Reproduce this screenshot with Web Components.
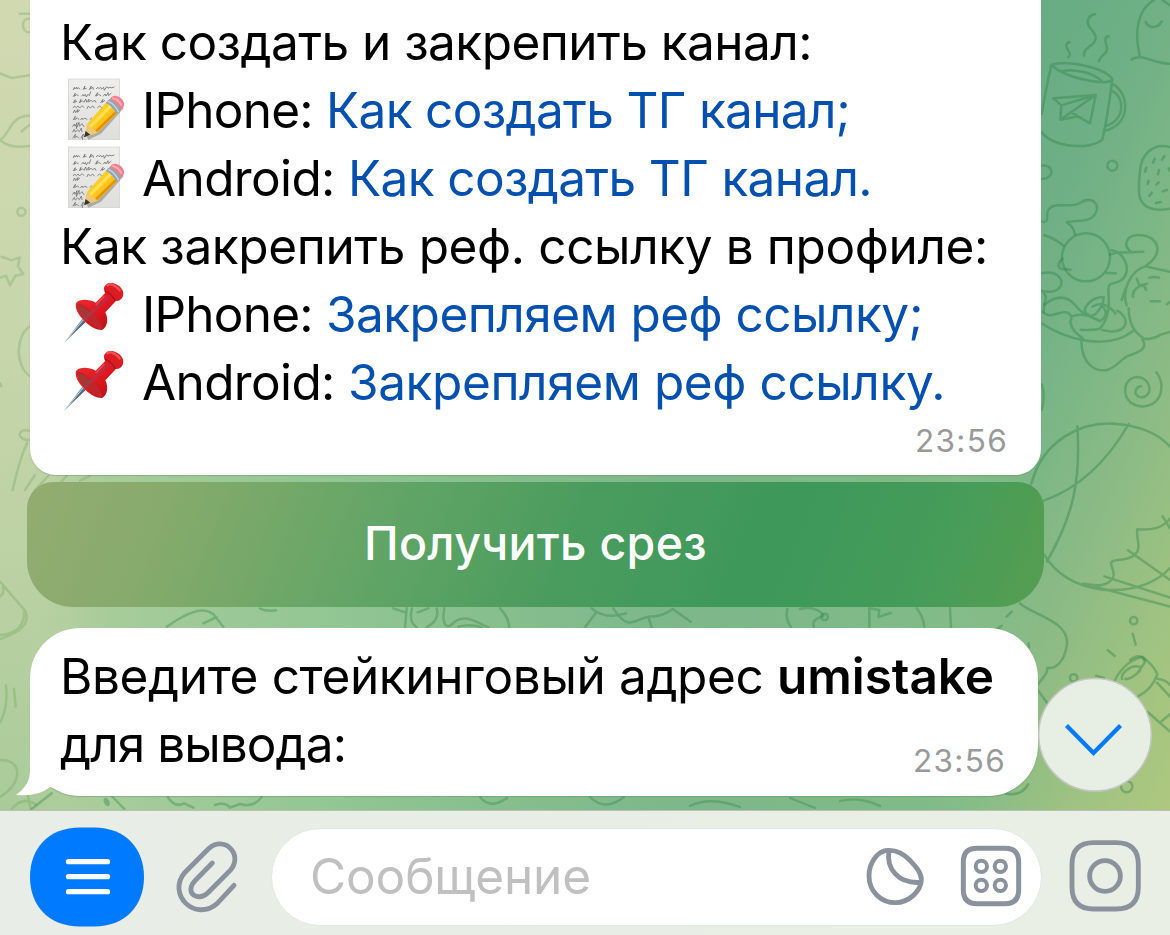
<!DOCTYPE html>
<html lang="ru">
<head>
<meta charset="utf-8">
<title>Чат</title>
<style>
html,body{margin:0;height:100%;overflow:hidden;background:#e9efe5}
body{font-family:Inter,"Liberation Sans",sans-serif}
</style>
</head>
<body>
<chat-app></chat-app>
<script>
const define = (name, html, init) => customElements.define(name, class extends HTMLElement {
  constructor() { super(); this.attachShadow({ mode: 'open' }).innerHTML = html; }
  connectedCallback() { if (init) init(this); }
});

/* A run of text whose tracking is set so that it fills the width in its "w" attribute. */
define('fit-text', `<style>:host{display:inline-block;white-space:pre}span{display:inline-block;white-space:pre}</style><span><slot></slot></span>`, el => {
  const span = el.shadowRoot.querySelector('span');
  const target = +el.getAttribute('w');
  const n = el.textContent.length;
  span.style.letterSpacing = ((target - span.getBoundingClientRect().width) / n) + 'px';
  el.style.width = target + 'px';
});

define('chat-wallpaper', `<style>:host{display:block;position:absolute;inset:0}svg{display:block}</style>
<svg width="1170" height="811" viewBox="0 0 1170 811">
<defs>
<linearGradient id="l" x1="0" y1="0" x2="0" y2="811" gradientUnits="userSpaceOnUse"><stop offset="0" stop-color="#d1d9b1"/><stop offset=".4" stop-color="#c8d6ac"/><stop offset=".75" stop-color="#b9d0a2"/><stop offset="1" stop-color="#a9cb9a"/></linearGradient>
<linearGradient id="m" x1="0" y1="0" x2="1170" y2="0" gradientUnits="userSpaceOnUse"><stop offset="0" stop-color="#b9d0a2"/><stop offset=".1" stop-color="#a6cc9a"/><stop offset=".28" stop-color="#92c693"/><stop offset=".57" stop-color="#7db78a"/><stop offset=".78" stop-color="#7fba88"/><stop offset=".9" stop-color="#8fc188"/></linearGradient>
<linearGradient id="r" x1="1040" y1="0" x2="1460" y2="187" gradientUnits="userSpaceOnUse"><stop offset="0" stop-color="#67ac85"/><stop offset=".2" stop-color="#6eaf85"/><stop offset=".4" stop-color="#7bb686"/><stop offset=".58" stop-color="#8cbb85"/><stop offset=".8" stop-color="#a0c381"/><stop offset="1" stop-color="#b0c87f"/></linearGradient>
<linearGradient id="fl"><stop stop-color="#fff"/><stop offset=".3" stop-color="#fff"/><stop offset="1" stop-color="#000"/></linearGradient>
<linearGradient id="fr"><stop stop-color="#000"/><stop offset="1" stop-color="#fff"/></linearGradient>
<mask id="ml" maskUnits="userSpaceOnUse" x="0" y="0" width="100" height="811"><rect width="100" height="811" fill="url(#fl)"/></mask>
<mask id="mr" maskUnits="userSpaceOnUse" x="960" y="0" width="210" height="811"><rect x="960" width="81" height="811" fill="url(#fr)"/><rect x="1040" width="130" height="811" fill="#fff"/></mask>
</defs>
<rect width="1170" height="811" fill="url(#m)"/>
<rect width="100" height="811" fill="url(#l)" mask="url(#ml)"/>
<rect x="960" width="210" height="811" fill="url(#r)" mask="url(#mr)"/>
<g fill="none" stroke="#2e8345" stroke-opacity=".4" stroke-width="7.5" stroke-linecap="round" stroke-linejoin="round">
 <g transform="translate(1030 0) scale(.33333)">
  <path d="M195 43C175 45 168 65 178 80C194 101 205 110 190 130C174 145 160 150 162 167M119 126C107 129 106 140 114 151C122 160 120 165 115 172M236 109C222 109 226 128 231 143C235 160 209 168 207 184"/>
  <path d="M64 195Q49 260 35 342M64 195C110 178 225 204 247 237C243 248 216 250 168 240Q98 226 64 195M94 214C130 204 190 217 218 246M247 237Q233 350 217 419C180 451 70 443 35 397M249 253C299 280 304 375 225 392M245 272C284 290 288 358 228 378"/>
  <path d="M70 295L197 285L94 316ZM94 316L91 359L197 285L180 370L125 338M91 359L143 349"/>
  <circle cx="247" cy="497" r="15"/><path d="M35 497C73 493 75 536 35 537"/>
  <path d="M372 0C325 28 311 90 329 168M305 178C338 158 365 190 420 191M347 66C355 85 382 87 395 65M397 0L420 16M420 441C371 427 333 463 330 512Q325 560 328 586C336 625 370 635 420 626"/>
  <path d="M374 476L369 488M403 468L396 479M349 503L345 515M387 510L384 523M356 542L353 552M386 547L379 554M365 578L358 588M398 574L411 570M378 609L392 606M416 505L420 513"/>
 </g>
 <g transform="translate(1030 200) scale(.33333)">
  <path d="M35 65C61 72 46 45 54 31C72 0 120 28 150 9C185-14 215 12 194 44C179 68 145 59 110 67C128 77 132 89 135 103M43 106Q70 113 101 137M97 176C80 190 82 212 107 207L122 209M35 220C85 209 113 248 81 270Q64 279 35 273M35 273Q52 285 45 304L40 336"/>
  <circle cx="168" cy="172" r="72"/>
  <path d="M230 219L257 220M240 164L260 158L340 155M245 151C292 158 306 225 270 243C243 256 237 244 235 270C238 310 240 350 210 386Q180 392 152 389M300 153C280 138 287 107 322 105C385 104 408 160 345 199C302 213 274 271 290 316M275 300L287 265M345 199L420 215M296 325C296 370 315 401 345 417Q370 418 392 404L420 396M43 314C85 280 117 292 139 319C158 347 190 350 210 363C230 350 235 335 212 313M40 336C60 366 107 314 124 350Q125 357 121 366C124 389 140 400 158 415M35 370C100 415 230 455 308 394M221 291C185 291 154 323 169 341C196 366 222 310 221 291M187 320C209 305 240 315 256 341M262 332C300 352 297 397 238 394L218 391M124 350Q145 341 173 347L210 363M154 415C153 500 201 517 234 509C260 500 271 480 291 469C325 458 356 447 337 418"/>
  <path d="M309 291C306 270 326 255 344 258M320 236L328 257L351 251M348 269L342 257M358 233Q374 229 387 233M362 304L390 304M411 313L420 306"/>
  <path d="M333 559C316 560 310 582 326 590C345 598 362 580 358 561C352 536 325 524 304 536C279 551 280 590 303 608C335 630 380 618 392 580C398 555 392 533 379 517"/>
  <path d="M35 553Q47 586 35 630"/>
 </g>
 <g transform="translate(1030 420) scale(.33333)">
  <path d="M4 192C38 59 155 6 250 11C335 16 387 43 420 80M142 19C153 185 128 290 51 424M296 12C227 132 145 205 42 242M42 403C88 480 164 502 218 509C325 517 390 478 420 444M420 296C396 326 365 331 322 328C317 357 337 382 315 404C286 427 258 413 243 427C244 446 256 455 249 473C234 500 200 498 160 491L420 560M223 469L420 533M294 391L420 480M398 289L420 325"/>
  <circle cx="311" cy="602" r="11"/><path d="M308 641L317 674M233 690L254 708M300 720Q329 698 345 720"/>
 </g>
 <g transform="translate(1000 590) scale(.33333)">
  <path d="M60 40C92 72 207 91 201 163C194 211 170 239 142 233C145 255 118 269 109 294L142 340M35 65L20 80M5 107L-8 117M86 160L87 172"/>
  <circle cx="221" cy="264" r="11"/><path d="M288 257L312 264M345 270C365 229 400 205 428 201Q460 225 472 252C459 292 435 309 414 319M366 267C362 250 392 222 421 231C428 242 390 270 376 267M428 201L435 217L414 247M472 266Q500 270 510 285M471 278L510 320M443 366L510 425M483 395L510 373"/>
  <circle cx="380" cy="590" r="17"/><path d="M18 611Q65 619 84 583"/>
 </g>
</g>
<g fill="none" stroke="#5e9d48" stroke-opacity=".27" stroke-width="7.5" stroke-linecap="round" stroke-linejoin="round">
 <g transform="scale(.33333)">
  <path d="M59 41L88 41M88 57C64 51 61 97 88 97M0 220L35 234L88 226M0 420C30 402 32 345 88 347M0 420Q29 447 88 438M65 394L88 375"/><circle cx="64" cy="635" r="12"/>
 </g>
 <g transform="translate(0 230) scale(.33333)">
  <path d="M5 80L34 91L59 82L54 109L70 132L46 137L30 166L18 137L-5 145M89 290C47 315 44 407 89 438M0 460L4 469M88 602C49 593 50 633 88 629M82 637Q58 690 38 780M105 735L75 780M145 738L105 780M200 738L160 780M270 738L240 752"/>
 </g>
 <g transform="translate(0 560) scale(.33333)">
  <path d="M0 65L76 153Q97 207 0 237M0 225C50 222 72 196 73 155M0 109Q13 102 9 80M18 376Q25 442 0 488M42 386L47 440M0 600C75 597 62 680 0 710M84 708L92 747M35 747Q70 706 108 734"/>
 </g>
</g>
<g fill="none" stroke="#2e8345" stroke-opacity=".36" stroke-width="7.5" stroke-linecap="round" stroke-linejoin="round">
 <g transform="translate(0 560) scale(.33333)"><path d="M500 200C570 152 610 140 640 163L670 200M610 190L650 171M780 146Q800 155 828 151M95 747L155 700M335 708L373 747M503 711Q525 745 552 730L580 743M645 735Q675 725 690 743L720 732Q760 745 785 711"/><ellipse cx="320" cy="726" rx="8" ry="13" transform="rotate(-25 320 726)" fill="#2e8345" fill-opacity=".4" stroke="none"/></g>
 <g transform="translate(330 595) scale(.33333)"><path d="M190 40L228 53M230 40L225 97M246 40Q235 80 260 97M320 40Q330 75 290 97M343 40C335 80 345 100 362 91C400 50 435 80 475 97M385 95Q420 85 455 97M263 52L295 40M510 40Q535 65 538 97M785 40Q825 75 888 55M800 50L765 97M850 40C895 110 910 75 955 65Q1000 65 1028 42L1082 80M955 65L965 97"/></g>
 <g transform="translate(660 595) scale(.33333)"><path d="M382 42Q375 70 393 97M420 42C460 32 485 50 490 62C468 74 455 75 462 97M628 40V97M628 40L658 45L655 66L692 54M770 40Q790 65 793 97M870 40L873 97"/><circle cx="494" cy="66" r="10"/></g>
 <path stroke-width="2.3" d="M480 797Q490 810 507 798M590 797Q605 812 624 797M690 806Q710 796 740 807M790 798L815 808M840 801Q860 796 880 806"/>
</g>
</svg>`);

define('memo-emoji', `<style>:host{display:block;width:60px;height:66px}svg{display:block}</style>
<svg width="60" height="66" viewBox="0 0 180 198">
<defs><linearGradient id="p" x1="0" y1="0" x2="0" y2="1"><stop stop-color="#eeeeec"/><stop offset="1" stop-color="#dededd"/></linearGradient>
<linearGradient id="y" x1="0" y1="0" x2="1" y2="1"><stop stop-color="#ffdc3b"/><stop offset=".5" stop-color="#ffc51c"/><stop offset="1" stop-color="#e39808"/></linearGradient></defs>
<rect x="10" y="9" width="154" height="182" fill="url(#p)" stroke="#d0d0d0" stroke-width="2"/>
<g fill="none" stroke="#777" stroke-width="2.6" stroke-linecap="round">
<path d="M25 41l3-7 2 5 5-6 1 6 5-4 3 4M55 40l5-10-3 9 7-2M73 41l6-11-3 9 8-5 1 6M94 38l5-4 3 4 5-4 3 5 6-5 2 9 7-11 4 4M130 36l5-3 3 3 9-3"/>
<path d="M25 61l6-9-3 9 7-5 5 3M50 60l4-5 3 5 4-5 3 8 5-8 4 4 4-12M91 60l7-10-4 10 7-5 6 4M115 60l5-6 3 6 6-10 1 9 8-7"/>
<path d="M25 80l6-9-3 9 7-4M43 80l5-10-2 9 6-5 5 5 5-10 3 10 7-10-1 9 7-5 5 4 7-4 3 6M107 80l7-10-3 9 8-5M125 80l5-7 5 6"/>
<path d="M25 95l4-5 5 5 5-5 5 6 7-7 5 5M66 98l4-8 6 6 7-6 5 6M98 95l5-5 7 5M116 94l8-5 3 4M25 110l4-8 3 8 7-10-2 9 7-6"/>
<path d="M25 131l6-10-2 10 8-5 5 4M47 131l4-5 3 5 5-5 7 4M75 130l5-4 6 5M23 151l5-7 2 7 6-11-2 18 8-19 1 12 8-8 6 9M23 168l5-8 3 8 7-6 5 5 6-11 2 11M24 186l7-11-2 10 7-4 5 5M48 186l7-12-3 17"/></g>
<path d="M61 176L68 149L134 78L172 92L104 168L66 186Z" fill="#444" opacity=".35" transform="translate(4 5)"/>
<path d="M66 144L124 79L157 112L97 171L58 183Z" fill="url(#y)"/>
<path d="M76 152L137 90" stroke="#ffe050" stroke-width="10"/><path d="M93 166L152 109" stroke="#dd9209" stroke-width="7"/>
<path d="M66 144Q78 150 79 158Q90 158 97 171L58 183Z" fill="#eec879"/>
<path d="M62 165L57 184L76 176Z" fill="#333"/>
<path d="M122 81L134 69Q160 76 168 103L155 114Q145 91 122 81Z" fill="#91a6b5"/><path d="M128 75Q151 86 161 109" stroke="#d1dce2" stroke-width="4" fill="none"/>
<path d="M134 71C140 56 156 56 168 67C181 79 180 92 167 103Q158 78 134 71Z" fill="#f07f8c"/><path d="M142 66Q160 69 170 89" fill="none" stroke="#ffadb3" stroke-width="6"/>
</svg>`);

define('pin-emoji', `<style>:host{display:block;width:64px;height:66px}svg{display:block}</style>
<svg width="64" height="66" viewBox="0 0 192 198">
<defs><linearGradient id="a" x1="0" y1="0" x2="1" y2="1"><stop stop-color="#ef3031"/><stop offset=".55" stop-color="#dd171e"/><stop offset="1" stop-color="#ad1019"/></linearGradient><linearGradient id="n" x1="0" y1="0" x2="1" y2="1"><stop offset=".3" stop-color="#9fc8e4"/><stop offset=".6" stop-color="#3d4550"/></linearGradient></defs>
<path d="M8 187L61 116L71 126L8 187Z" fill="url(#n)"/>
<path d="M8 187L65 118" stroke="#bcd8ee" stroke-width="3"/>
<path d="M42 69C53 56 80 57 101 68L133 35L161 64L130 97C141 118 135 144 120 150C103 151 78 137 63 118C46 101 38 82 42 69Z" fill="url(#a)"/>
<path d="M45 73C56 66 83 85 106 116C120 135 123 146 119 148C100 149 42 101 45 73Z" fill="#be262b"/>
<path d="M48 78Q60 75 87 100L69 119Q48 99 48 78Z" fill="#9c3f35" opacity=".7"/>
<path d="M68 119L137 51" stroke="#994069" stroke-width="9" opacity=".5"/>
<path d="M126 29C123 12 147 2 165 14C187 25 190 50 173 61C155 70 130 50 126 29Z" fill="#dc1c23"/>
<path d="M136 16C146 7 165 20 173 31" fill="none" stroke="#f2504e" stroke-width="7" stroke-linecap="round"/><path d="M129 33Q147 40 160 62" stroke="#a61018" stroke-width="4" fill="none"/>
<path d="M103 73L125 50" stroke="#f5403f" stroke-width="6" stroke-linecap="round"/>
</svg>`);

define('guide-row', `<style>
:host{display:flex;height:68px;line-height:68px;white-space:nowrap;color:#000}
.i{flex:none;width:81px;padding-left:4px;box-sizing:border-box;margin-left:1px}
::slotted([slot=link]){color:#0450ae}
</style><div class="i"><slot name="icon"></slot></div><slot></slot><slot name="link"></slot>`);

define('guide-card', `<style>
:host{display:block;box-sizing:border-box;width:1011px;height:475px;margin-left:30px;padding:8px 33px 0 30px;background:#fff;border-radius:0 0 26px 26px;font-size:49.5px;position:relative;box-shadow:0 1px 1px #5f8b5b66}
.t{height:68px;line-height:68px;white-space:nowrap}
.time{height:40px;line-height:40px;text-align:right;font-size:31.5px;color:#999;margin-top:5px}
</style>
<div class="t"><fit-text w="752">Как создать и закрепить канал:</fit-text></div>
<guide-row><memo-emoji slot="icon"></memo-emoji><fit-text w="184">IPhone: </fit-text><fit-text slot="link" w="524">Как создать ТГ канал;</fit-text></guide-row>
<guide-row><memo-emoji slot="icon"></memo-emoji><fit-text w="206">Android: </fit-text><fit-text slot="link" w="524">Как создать ТГ канал.</fit-text></guide-row>
<div class="t"><fit-text w="928">Как закрепить реф. ссылку в профиле:</fit-text></div>
<guide-row><pin-emoji slot="icon" style="margin-left:-3px"></pin-emoji><fit-text w="184">IPhone: </fit-text><fit-text slot="link" w="597">Закрепляем реф ссылку;</fit-text></guide-row>
<guide-row><pin-emoji slot="icon" style="margin-left:-3px"></pin-emoji><fit-text w="206">Android: </fit-text><fit-text slot="link" w="597">Закрепляем реф ссылку.</fit-text></guide-row>
<div class="time"><fit-text w="93">23:56</fit-text></div>`);

define('inline-button', `<style>
:host{display:flex;justify-content:center;position:relative;width:1017px;height:125px;line-height:123px;margin:7px 0 0 27px;border-radius:26px 26px 46px 46px;color:#fff;font-size:46.5px;font-weight:500;background:linear-gradient(112deg,#94ac70 0,#86ab6c 14%,#62a566 35%,#4a9c5e 53%,#3d985a 72%,#469c59 88%,#569e50 100%)}
</style><slot></slot>`);

define('prompt-bubble', `<style>
:host{display:block;position:relative;box-sizing:border-box;width:1008px;height:168px;margin:21px 0 0 30px;padding:14px 32px 0 30px;background:#fff;border-radius:50px;font-size:49.5px;box-shadow:0 1px 1px #5f8b5b66}
.t{display:flex;position:relative;height:68px;line-height:68px;white-space:nowrap}b{font-weight:600}
.last{justify-content:space-between}.time{font-size:31.5px;color:#999;line-height:102px}
svg{position:absolute;left:-14px;bottom:0}
</style><svg width="54" height="60" viewBox="0 0 54 60"><path d="M14 0V36Q14 49 0 59Q22 61 34 51L54 59V0Z" fill="#fff"/></svg>
<div class="t"><fit-text w="717">Введите стейкинговый адрес </fit-text><b><fit-text w="217">umistake</fit-text></b></div>
<div class="t last"><fit-text w="286">для вывода:</fit-text><span class="time"><fit-text w="93">23:56</fit-text></span></div>`);

define('scroll-down', `<style>
:host{display:block;position:absolute;left:1038px;top:677px;width:114px;height:115px}svg{display:block}
</style><svg width="114" height="115" viewBox="0 0 114 115"><circle cx="57" cy="57.800" r="56.300" fill="#e7eee3" stroke="#c4c6c2" stroke-width="1.500"/><path d="M28.500 48.500L55.500 76L82.500 48.500" fill="none" stroke="#007aff" stroke-width="4.300"/></svg>`);

define('message-bar', `<style>
:host{display:flex;align-items:flex-start;position:relative;box-sizing:border-box;height:125px;border-top:1px solid #bbbfb8;padding:17px 28px 0 30px;background:linear-gradient(90deg,#e8eee7,#e9efe4)}
svg{display:block;flex:none}
.menu{margin-top:-1px}
.clip{margin:11px 0 0 31px}
.field{display:flex;box-sizing:border-box;width:773px;height:98px;margin-left:31px;border:1px solid #e3e6e1;border-radius:49px;background:#fff;padding-left:38px;line-height:94px;font-size:49.5px;color:#c0c0c0}
.field .s{margin:17px 0 0 274px}.field .g{margin:16px 0 0 35px}
.cam{margin:11px 0 0 26px}
</style>
<svg class="menu" width="114" height="100" viewBox="0 0 114 100"><path d="M50 .5H64C96 .5 114 22 114 50S96 99.500 64 99.500H50C18 99.500 0 78 0 50S18 .5 50 .5Z" fill="#007aff"/><path d="M38.500 34.700H77.500M38.500 49.700H77.500M38.500 64.700H77.500" stroke="#fff" stroke-width="5.200" stroke-linecap="round"/></svg>
<svg class="clip" width="65" height="74" viewBox="528 88 195 222"><path d="M640 160L590 211C552 250 598 278 626 250L695 181C734 132 674 77 630 116L557 189C503 254 588 339 655 281L705 227" fill="none" stroke="#8a929e" stroke-width="14.500" stroke-linecap="round"/></svg>
<div class="field"><fit-text w="281">Сообщение</fit-text>
<svg class="s" width="60" height="60" viewBox="69 108 180 180"><g fill="none" stroke="#8a929e" stroke-width="14.500"><path d="M140 121C107 119 81 160 81 197C81 245 117 278 161 278C200 278 238 243 238 208C238 187 220 168 203 150C181 128 161 120 140 121Z"/><path d="M141 121C132 176 168 223 238 217"/></g></svg>
<svg class="g" width="62" height="62" viewBox="357 104 186 186"><g fill="none" stroke="#8a929e" stroke-width="15"><path d="M408 114H492Q533 114 533 155V239Q533 280 492 280H408Q367 280 367 239V155Q367 114 408 114Z"/><g stroke-width="12"><circle cx="421" cy="168" r="17"/><circle cx="478" cy="168" r="17"/><circle cx="421" cy="225" r="17"/><circle cx="478" cy="225" r="17"/></g></g></svg></div>
<svg class="cam" width="74" height="74" viewBox="687 86 222 222"><g fill="none" stroke="#8a929e" stroke-width="14.500"><path d="M764 97H832Q898 97 898 163V230Q898 296 832 296H764Q699 296 699 230V163Q699 97 764 97Z"/><circle cx="798" cy="197" r="46"/></g></svg>`);

define('chat-app', `<style>
:host{display:block;width:1170px;height:935px;overflow:hidden}
main{display:flow-root;position:relative;height:810px;overflow:hidden}
</style><main><chat-wallpaper></chat-wallpaper><guide-card></guide-card><inline-button><fit-text w="343">Получить срез</fit-text></inline-button><prompt-bubble></prompt-bubble><scroll-down></scroll-down></main><message-bar></message-bar>`);
</script>
</body>
</html>
